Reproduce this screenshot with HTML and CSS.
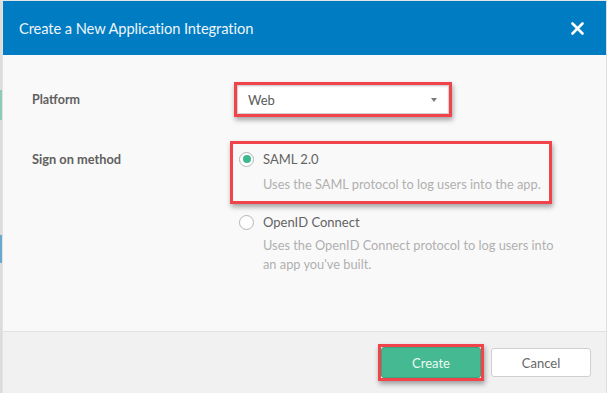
FILE: index.html
```html
<!DOCTYPE html>
<html>
<head>
<meta charset="utf-8">
<link rel="stylesheet" href="styles.css">
</head>
<body>
<div class="page">
  <div class="edge">
    <div class="edge-teal"></div>
    <div class="edge-blue"></div>
  </div>
  <div class="dialog">
    <div class="header">
      <h1 class="title">Create a New Application Integration</h1>
      <svg class="close" width="13" height="13" viewBox="0 0 13 13"><path d="M1.5 1.5 L11.5 11.5 M11.5 1.5 L1.5 11.5" stroke="#fff" stroke-width="2.6" stroke-linecap="round"/></svg>
    </div>
    <div class="body">
      <div class="row">
        <div class="label">Platform</div>
        <div class="field">
          <div class="hl hl-select">
            <div class="select">
              <span>Web</span>
              <span class="arrow"></span>
            </div>
          </div>
        </div>
      </div>
      <div class="row row-method">
        <div class="label label-method">Sign on method</div>
        <div class="field options">
          <div class="option hl">
            <div class="opt-head"><span class="radio checked"></span><span class="opt-name">SAML 2.0</span></div>
            <div class="opt-desc">Uses the SAML protocol to log users into the app.</div>
          </div>
          <div class="option plain">
            <div class="opt-head"><span class="radio"></span><span class="opt-name">OpenID Connect</span></div>
            <div class="opt-desc">Uses the OpenID Connect protocol to log users into an app you've built.</div>
          </div>
        </div>
      </div>
    </div>
    <div class="footer">
      <div class="hl hl-btn"><button class="btn btn-primary">Create</button></div>
      <button class="btn btn-cancel">Cancel</button>
    </div>
  </div>
</div>
</body>
</html>
```
FILE: styles.css
```css
* { box-sizing: border-box; }
html, body { margin: 0; padding: 0; }
body {
  width: 607px;
  height: 393px;
  overflow: hidden;
  background: #e6e6e6;
  font-family: Lato, "Open Sans", sans-serif;
}
.page {
  display: flex;
  height: 393px;
  padding-top: 1px;
}
.edge {
  width: 2px;
  flex: none;
  display: flex;
  flex-direction: column;
  background: #dcdcdc;
}
.edge-teal {
  height: 30px;
  margin-top: 89px;
  background: #8ecbb6;
}
.edge-blue {
  height: 28px;
  margin-top: 115px;
  background: #6aa9cf;
}
.dialog {
  flex: 1;
  display: flex;
  flex-direction: column;
  background: #f9f9f9;
  border-left: 1px solid #e2e2e2;
  border-right: 1px solid #dedede;
}
.header {
  height: 54px;
  flex: none;
  background: #007cc3;
  display: flex;
  align-items: center;
  justify-content: space-between;
  padding: 0 22px 0 16px;
}
.title {
  margin: 0;
  font-weight: 400;
  font-size: 14.7px;
  color: #eef5fa;
  letter-spacing: -0.1px;
}
.close { display: block; }
.body {
  flex: 1;
  padding: 27px 0 0 29px;
}
.row {
  display: grid;
  grid-template-columns: 198px 1fr;
  align-items: center;
}
.row-method {
  margin-top: 24px;
  align-items: start;
}
.label {
  font-size: 12.5px;
  font-weight: 700;
  color: #606060;
}
.label-method { padding-top: 10px; font-size: 12.8px; }
.hl {
  border: 3px solid #f1434a;
  box-shadow: 1px 3px 5px rgba(0,0,0,0.35);
}
.hl-select {
  display: inline-block;
  margin-left: 4px;
}
.select {
  width: 212px;
  height: 29px;
  background: #fff;
  border: 1px solid #d2d2d2;
  box-shadow: inset 0 1px 2px rgba(0,0,0,0.1);
  display: flex;
  align-items: center;
  justify-content: space-between;
  padding: 0 11px 0 10px;
  font-size: 13px;
  color: #5a5a5a;
}
.arrow {
  width: 0;
  height: 0;
  border-left: 3.5px solid transparent;
  border-right: 3.5px solid transparent;
  border-top: 4px solid #7a7a7a;
}
.options {
  display: flex;
  flex-direction: column;
  gap: 0;
}
.option {
  width: 322px;
  padding: 7px 6px 7px 6px;
}
.option.plain { border: 3px solid transparent; }
.opt-head {
  display: flex;
  align-items: center;
  height: 16px;
}
.radio {
  width: 15px;
  height: 15px;
  border-radius: 50%;
  border: 1px solid #b5b5b5;
  background: #fff;
  margin-right: 9px;
  display: flex;
  align-items: center;
  justify-content: center;
  flex: none;
}
.radio.checked::after {
  content: "";
  width: 8px;
  height: 8px;
  border-radius: 50%;
  background: #3cb98c;
}
.opt-name {
  font-size: 13px;
  color: #636363;
}
.opt-desc {
  margin: 8px 0 0 24px;
  font-size: 12.8px;
  line-height: 19px;
  color: #b0b0b0;
  width: 300px;
}
.option.plain .opt-desc { margin-top: 6px; }
.footer {
  flex: none;
  height: 62px;
  background: #f1f1f1;
  border-top: 1px solid #e1e1e1;
  display: flex;
  align-items: center;
  justify-content: flex-end;
  gap: 7px;
  padding-right: 15px;
}
.hl-btn { display: inline-block; }
.btn {
  font-family: Lato, "Open Sans", sans-serif;
  font-size: 13px;
  width: 100px;
  height: 29px;
  border-radius: 3px;
  cursor: pointer;
}
.btn-primary {
  display: block;
  height: 31px;
  background: #45b991;
  border: 1px solid #3aa37f;
  color: #eef9f4;
}
.btn-cancel {
  background: #fff;
  border: 1px solid #cfcfcf;
  color: #666;
}
```
